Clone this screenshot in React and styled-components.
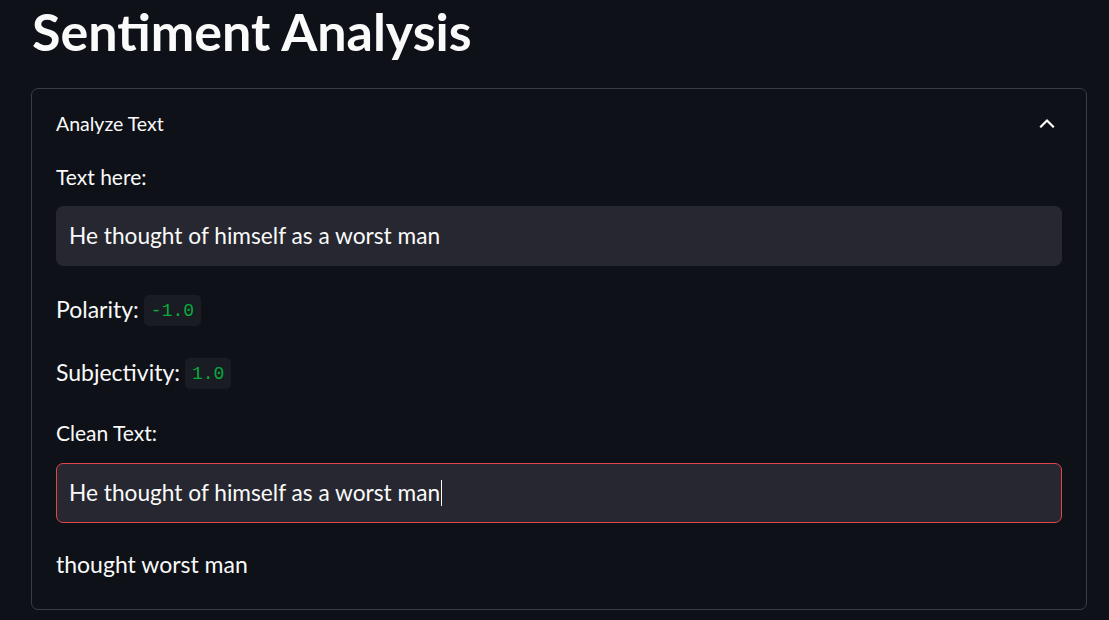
import styled, { createGlobalStyle } from "styled-components";

const GlobalStyle = createGlobalStyle`
  html, body {
    margin: 0;
    padding: 0;
    background: #0e1117;
  }
  body {
    font-family: Lato, "Noto Sans", "Liberation Sans", sans-serif;
    color: #fafafa;
  }
`;

const Page = styled.main`
  width: 1109px;
  height: 620px;
  overflow: hidden;
  padding: 0 22px 0 31px;
  box-sizing: border-box;
`;

const Title = styled.h1`
  margin: 0 0 0 1px;
  padding-bottom: 26px;
  font-size: 52px;
  font-weight: 700;
  line-height: 62px;
`;

const Expander = styled.section`
  border: 1px solid #3b3d44;
  border-radius: 7px;
`;

const Header = styled.div`
  height: 70px;
  box-sizing: border-box;
  display: flex;
  align-items: center;
  justify-content: space-between;
  padding: 0 31px 2px 24px;
  font-size: 19.5px;
`;

const Body = styled.div`
  display: flex;
  flex-direction: column;
  padding: 6px 24px 30px 24px;
`;

const Label = styled.label`
  font-size: 21px;
  line-height: 24px;
  margin-bottom: ${(p) => p.$gap}px;
`;

const Field = styled.div`
  height: 60px;
  box-sizing: border-box;
  display: flex;
  align-items: center;
  padding: 0 12px 1px;
  background: #262730;
  border: 1px solid ${(p) => (p.$focused ? "#e0464b" : "#262730")};
  border-radius: 7px;
  font-size: 22.7px;
  margin-bottom: ${(p) => p.$gap}px;
`;

const Caret = styled.span`
  display: inline-block;
  width: 1px;
  height: 26px;
  background: #fafafa;
  margin-left: 1px;
`;

const StatRow = styled.div`
  display: flex;
  align-items: center;
  gap: 5px;
  height: 31px;
  font-size: 23px;
  margin-bottom: ${(p) => p.$gap}px;
`;

const StatName = styled.span`
  margin-bottom: 3px;
`;

const Code = styled.code`
  display: inline-flex;
  align-items: center;
  height: 31px;
  padding: 0 7px;
  border-radius: 5px;
  background: #1a1c23;
  color: #09ab3b;
  font-family: "Liberation Mono", "DejaVu Sans Mono", monospace;
  font-size: 18px;
`;

const Output = styled.p`
  margin: 0;
  font-size: 23px;
  line-height: 30px;
`;

const Chevron = () => (
  <svg width="16" height="10" viewBox="0 0 16 10" fill="none">
    <path d="M2 8.5 L8 2.5 L14 8.5" stroke="#fafafa" strokeWidth="2.2" strokeLinecap="square" />
  </svg>
);

export default function App() {
  const text = "He thought of himself as a worst man";
  return (
    <>
      <GlobalStyle />
      <Page>
        <Title>Sentiment Analysis</Title>
        <Expander>
          <Header>
            <span>Analyze Text</span>
            <Chevron />
          </Header>
          <Body>
            <Label $gap={17}>Text here:</Label>
            <Field $gap={29}>{text}</Field>
            <StatRow $gap={32}>
              <StatName>Polarity:</StatName>
              <Code>-1.0</Code>
            </StatRow>
            <StatRow $gap={32}>
              <StatName>Subjectivity:</StatName>
              <Code>1.0</Code>
            </StatRow>
            <Label $gap={18}>Clean Text:</Label>
            <Field $focused $gap={26}>
              {text}
              <Caret />
            </Field>
            <Output>thought worst man</Output>
          </Body>
        </Expander>
      </Page>
    </>
  );
}
